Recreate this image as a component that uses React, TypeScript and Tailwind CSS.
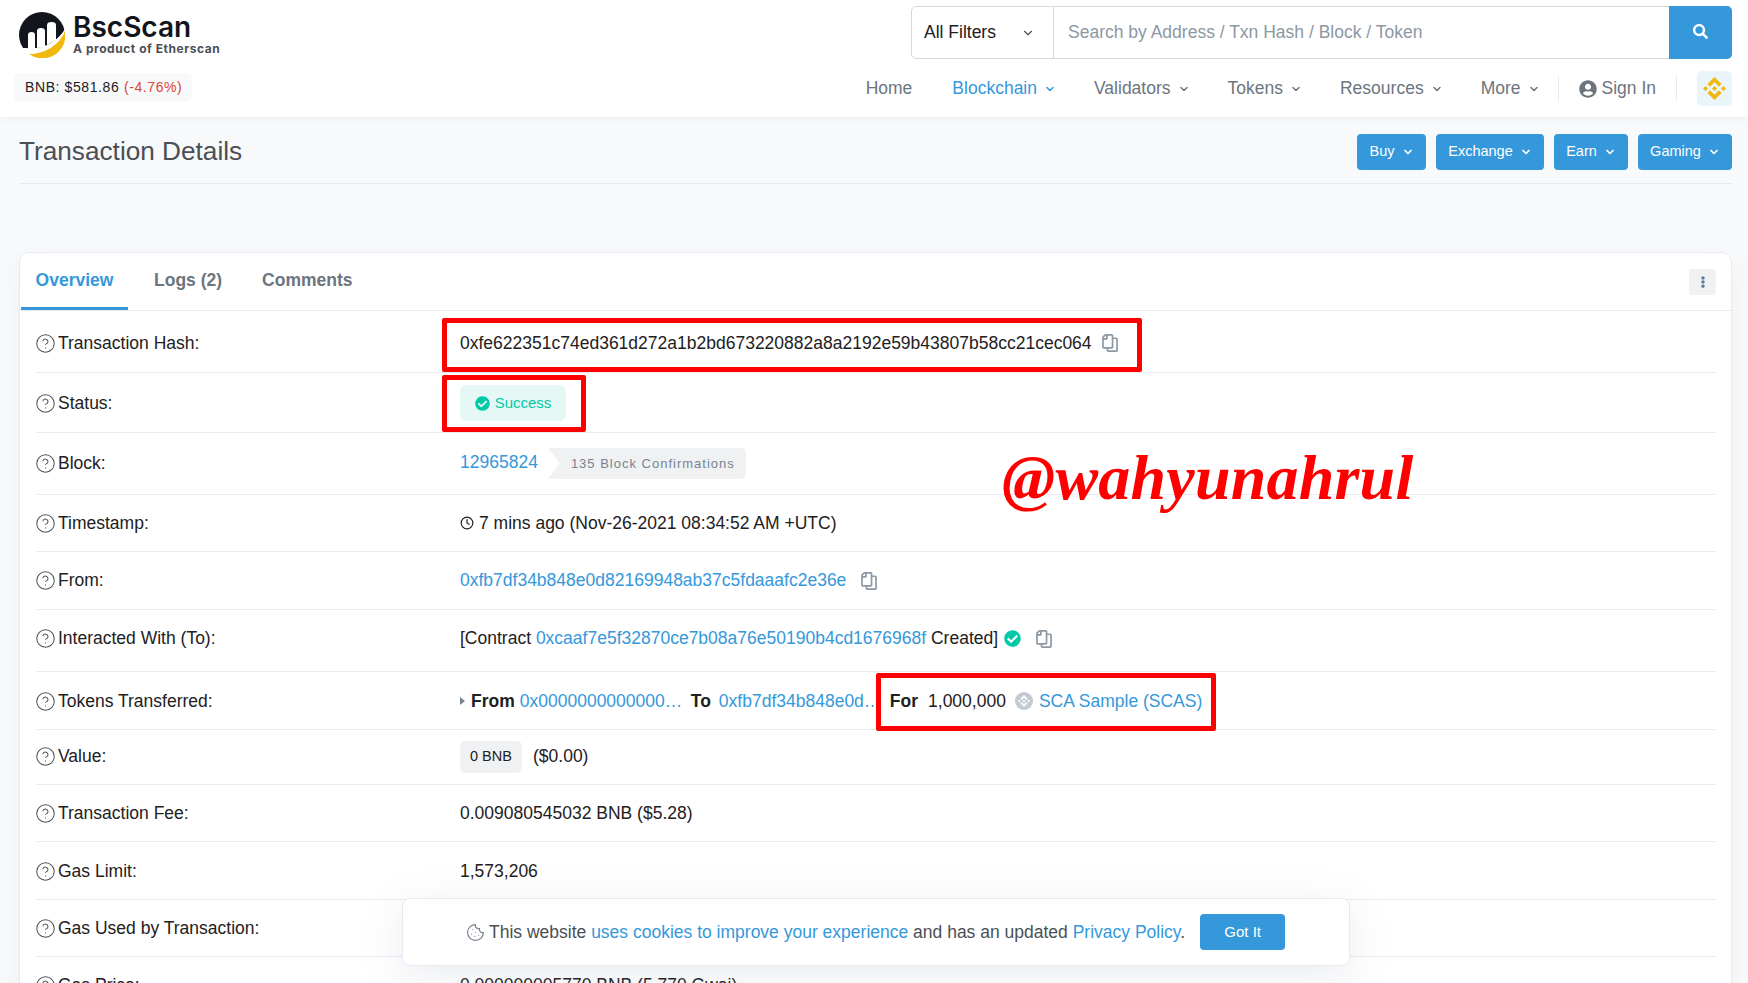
import React from 'react';
import { ChevronDown, CircleHelp, Clock, Cookie } from 'lucide-react';
import { FaCheckCircle, FaEllipsisV, FaRegCopy, FaSearch, FaUserCircle } from 'react-icons/fa';
import { SiBinance } from 'react-icons/si';

const Logo = () => (
  <svg width="46" height="46" viewBox="0 0 46 46" className="shrink-0">
    <circle cx="23" cy="23" r="23" fill="#12161c" />
    <path d="M0 36 L7 36 C24 38 38 30 46 17 L46 46 L0 46 Z" fill="#fff" />
    <path d="M9 37 V23 Q9 20 12.5 20 Q16 20 16 23 V37 Z" fill="#fff" />
    <path d="M18 36 V19 Q18 16 22 16 Q26 16 26 19 V35 Z" fill="#fff" />
    <path d="M28 33 V13 Q28 10 32.500 10 Q37 10 37 13 V28 Z" fill="#fff" />
    <path d="M46 19 A23 23 0 0 1 10 42 C25 42 40 34 46 19 Z" fill="#f0b90b" />
  </svg>
);

const NavItem = ({ label, active }: { label: string; active?: boolean }) => (
  <a className={`flex items-center gap-[7px] ${active ? 'text-[#3498db]' : 'text-[#6c757d]'}`}>
    {label}
    <ChevronDown size={12} strokeWidth={3} />
  </a>
);

const ActionButton = ({ label, width }: { label: string; width: string }) => (
  <button className={`flex h-[36px] items-center justify-center gap-[7px] rounded-[4px] bg-[#3498db] text-[14.5px] text-white ${width}`}>
    {label}
    <ChevronDown size={12} strokeWidth={3.5} />
  </button>
);

const CopyIcon = ({ className }: { className: string }) => (
  <FaRegCopy size={18} className={`scale-x-[-1] text-[#8c98a4] ${className}`} />
);

const Link = ({ children, className = '' }: { children: React.ReactNode; className?: string }) => (
  <a className={`text-[#3498db] ${className}`}>{children}</a>
);

const Row = ({ label, height, children }: { label: string; height: string; children?: React.ReactNode }) => (
  <div className={`flex items-center border-b border-[#e7eaf3] ${height}`}>
    <div className="flex w-[424px] shrink-0 items-center gap-[2px]">
      <CircleHelp size={21} strokeWidth={1.15} className="-ml-[1px] text-[#4a4f55]" />
      {label}
    </div>
    <div className="flex min-w-0 items-center">{children}</div>
  </div>
);

const App = () => {
  return (
    <div className="relative h-[983px] w-[1748px] overflow-hidden bg-[#f8f9fa] font-['Liberation_Sans',Arial,sans-serif] text-[17.5px] text-[#1e2022]">
      <header className="flex h-[117px] justify-between bg-white pr-[16px] shadow-[0_1px_8px_rgba(151,164,175,0.12)]">
        <div className="pl-[14px]">
          <div className="ml-[5px] mt-[12px] flex gap-[8px]">
            <Logo />
            <div className="font-['Inter',sans-serif]">
              <div className="text-[28px] font-semibold leading-[30px] text-[#12161c]">BscScan</div>
              <div className="text-[12px] font-bold leading-[14px] tracking-[0.55px] text-[#4a4f55]">A product of Etherscan</div>
            </div>
          </div>
          <div className="mt-[15px] flex h-[29px] w-[178px] items-center rounded-[6px] bg-[#f8f9fa] pl-[11px] text-[14px] tracking-[0.6px] text-[#1e2022]">
            BNB: $581.86&nbsp;<span className="text-[#de4437]">(-4.76%)</span>
          </div>
        </div>

        <div className="flex w-[880px] flex-col items-end">
          <div className="mt-[6px] flex h-[53px] w-[821px] rounded-[5px] border border-[#d5dae2]">
            <div className="flex w-[142px] items-center justify-between border-r border-[#d5dae2] pl-[12px] pr-[18px] text-[#1e2022]">
              All Filters
              <ChevronDown size={14} strokeWidth={2} className="text-[#4a4f55]" />
            </div>
            <div className="flex flex-1 items-center pl-[14px] text-[#8c98a4]">Search by Address / Txn Hash / Block / Token</div>
            <div className="-m-px flex w-[63px] items-center justify-center rounded-r-[5px] bg-[#3498db] pb-[2px] text-white">
              <FaSearch size={15} />
            </div>
          </div>
          <nav className="mt-[12px] flex h-[35px] items-center gap-[20px] text-[#6c757d]">
            <div className="-mr-[2px] flex items-center gap-[38px]">
              <a className="mr-[2px]">Home</a>
              <NavItem label="Blockchain" active />
              <NavItem label="Validators" />
              <NavItem label="Tokens" />
              <NavItem label="Resources" />
              <NavItem label="More" />
            </div>
            <div className="h-[25px] w-px bg-[#e7eaf3]" />
            <a className="flex items-center gap-[5px]">
              <FaUserCircle size={18} />
              Sign In
            </a>
            <div className="h-[25px] w-px bg-[#e7eaf3]" />
            <div className="flex h-[35px] w-[35px] items-center justify-center rounded-[5px] bg-[#eaf4fb] text-[#f0b90b]">
              <SiBinance size={23} />
            </div>
          </nav>
        </div>
      </header>

      <div className="mx-[20px] mr-[16px] flex h-[67px] justify-between border-b border-[#e7eaf3]">
        <h1 className="-ml-[1px] mt-[17px] text-[26.2px] leading-[34px] text-[#4a4f55]">Transaction Details</h1>
        <div className="mt-[17px] flex gap-[10px]">
          <ActionButton label="Buy" width="w-[69px]" />
          <ActionButton label="Exchange" width="w-[108px]" />
          <ActionButton label="Earn" width="w-[74px]" />
          <ActionButton label="Gaming" width="w-[94px]" />
        </div>
      </div>

      <main className="ml-[19px] mr-[16px] mt-[68px] rounded-t-[10px] border border-[#e7eaf3] bg-white shadow-[0_8px_24px_rgba(140,152,164,0.08)]">
        <div className="flex h-[58px] items-center justify-between border-b border-[#e7eaf3] font-bold text-[#6c757d]">
          <div className="flex h-full">
            <a className="ml-[1px] flex w-[107px] items-center justify-center border-b-[3px] border-[#3498db] text-[#3498db]">Overview</a>
            <a className="ml-[26px] flex items-center pb-[3px]">Logs (2)</a>
            <a className="ml-[40px] flex items-center pb-[3px]">Comments</a>
          </div>
          <div className="mr-[15px] flex h-[26px] w-[27px] items-center justify-center rounded-[4px] bg-[#f0f1f3] text-[#5c7a99]">
            <FaEllipsisV size={12} />
          </div>
        </div>

        <div className="pl-[16px] pr-[15px]">
          <Row label="Transaction Hash:" height="h-[62px] pt-[3px]">
            <span>0xfe622351c74ed361d272a1b2bd673220882a8a2192e59b43807b58cc21cec064</span>
            <CopyIcon className="ml-[9px]" />
          </Row>
          <Row label="Status:" height="h-[60px] pt-[1px]">
            <span className="flex h-[36px] w-[106px] items-center justify-center gap-[5px] rounded-[6px] bg-[#e6f8f5] text-[15px] text-[#00c9a7]">
              <FaCheckCircle size={15} />
              Success
            </span>
          </Row>
          <Row label="Block:" height="h-[62px]">
            <Link className="-mt-[3px]">12965824</Link>
            <span className="ml-[10px] flex h-[31px] w-[198px] items-center rounded-r-[5px] bg-[#f0f1f3] pl-[23px] text-[13px] tracking-[1px] text-[#77838f] [clip-path:polygon(0_0,100%_0,100%_100%,0_100%,12px_50%)]">
              135 Block Confirmations
            </span>
          </Row>
          <Row label="Timestamp:" height="h-[57px]">
            <Clock size={14} strokeWidth={2} className="mr-[5px]" />
            7 mins ago (Nov-26-2021 08:34:52 AM +UTC)
          </Row>
          <Row label="From:" height="h-[58px]">
            <Link>0xfb7df34b848e0d82169948ab37c5fdaaafc2e36e</Link>
            <CopyIcon className="ml-[14px]" />
          </Row>
          <Row label="Interacted With (To):" height="h-[62px] pb-[4px]">
            [Contract&nbsp;<Link>0xcaaf7e5f32870ce7b08a76e50190b4cd1676968f</Link>&nbsp;Created]
            <FaCheckCircle size={17} className="ml-[6px] text-[#00c9a7]" />
            <CopyIcon className="ml-[14px]" />
          </Row>
          <Row label="Tokens Transferred:" height="h-[58px] pt-[1px]">
            <span className="mr-[6px] h-0 w-0 border-y-[4px] border-l-[5px] border-y-transparent border-l-[#77838f]" />
            <b>From</b>
            <Link className="ml-[5px] w-[163px] truncate">0x0000000000000000000000000000000000000000</Link>
            <b className="ml-[8px]">To</b>
            <Link className="ml-[8px] w-[163px] truncate">0xfb7df34b848e0d82169948ab37c5fdaaafc2e36e</Link>
            <b className="ml-[8px]">For</b>
            <span className="ml-[10px]">1,000,000</span>
            <span className="ml-[9px] flex h-[18px] w-[18px] items-center justify-center rounded-full bg-[#c3cad3] text-white">
              <SiBinance size={12} />
            </span>
            <Link className="ml-[6px]">SCA Sample (SCAS)</Link>
          </Row>
          <Row label="Value:" height="h-[55px] pb-[1px]">
            <span className="flex h-[32px] w-[62px] items-center justify-center rounded-[5px] bg-[#f0f1f3] text-[14.5px]">0 BNB</span>
            <span className="ml-[11px]">($0.00)</span>
          </Row>
          <Row label="Transaction Fee:" height="h-[57px]">0.009080545032 BNB ($5.28)</Row>
          <Row label="Gas Limit:" height="h-[58px] pt-[1px]">1,573,206</Row>
          <Row label="Gas Used by Transaction:" height="h-[57px]" />
          <Row label="Gas Price:" height="h-[57px]">0.000000005770 BNB (5.770 Gwei)</Row>
        </div>
      </main>

      {/* annotations drawn on top of the screenshot */}
      <div className="absolute left-[442px] top-[318px] h-[54px] w-[700px] rounded-[2px] border-[5px] border-[#ff0000]" />
      <div className="absolute left-[442px] top-[375px] h-[57px] w-[144px] rounded-[2px] border-[5px] border-[#ff0000]" />
      <div className="absolute left-[876px] top-[673px] h-[58px] w-[340px] rounded-[2px] border-[5px] border-[#ff0000]" />
      <div className="absolute left-[1002px] top-[441px] font-['Liberation_Serif',serif] text-[64px] font-bold italic leading-[74px] tracking-[0.2px] text-[#ff0000]">@wahyunahrul</div>

      <div className="absolute left-[402px] top-[898px] flex h-[68px] w-[948px] items-center rounded-[8px] border border-[#e7eaf3] bg-white pl-[63px] text-[#4a4f55] shadow-[0_10px_40px_rgba(140,152,164,0.18)]">
        <Cookie size={19} strokeWidth={1.5} className="mr-[4px] text-[#77838f]" />
        <span>
          This website <Link>uses cookies to improve your experience</Link> and has an updated <Link>Privacy Policy</Link>.
        </span>
        <button className="ml-[15px] flex h-[36px] w-[85px] items-center justify-center rounded-[4px] bg-[#3498db] text-[15px] text-white">Got It</button>
      </div>
    </div>
  );
};

export default App;
